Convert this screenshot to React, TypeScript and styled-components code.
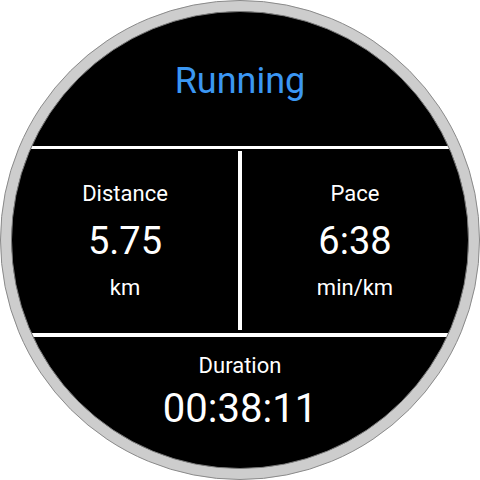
import React from "react";
import styled, { createGlobalStyle } from "styled-components";

const GlobalStyle = createGlobalStyle`
  html, body {
    margin: 0;
    padding: 0;
    background: #ffffff;
  }
  body {
    font-family: Roboto, "Noto Sans", "Liberation Sans", sans-serif;
  }
`;

const Bezel = styled.div`
  box-sizing: border-box;
  width: 480px;
  height: 480px;
  border-radius: 50%;
  border: 1px solid #8a8a8a;
  background: #cdcdcd;
  padding: 10px;
`;

const Face = styled.div`
  box-sizing: border-box;
  width: 100%;
  height: 100%;
  border-radius: 50%;
  border: 1px solid #7c7c7c;
  background: #000000;
  overflow: hidden;
  display: flex;
  flex-direction: column;
`;

const Header = styled.div`
  height: 134px;
  flex: none;
  display: flex;
  align-items: center;
  justify-content: center;
  padding-top: 3px;
  box-sizing: border-box;
`;

const Title = styled.div`
  color: #3b97f3;
  font-size: 36px;
  line-height: 42px;
  letter-spacing: 0;
`;

const Rule = styled.div<{ $thick: number; $after: number }>`
  flex: none;
  height: ${(p) => p.$thick}px;
  margin-bottom: ${(p) => p.$after}px;
  background: #ffffff;
`;

const Middle = styled.div`
  flex: none;
  height: 179px;
  display: flex;
  margin-bottom: 3px;
`;

const Divider = styled.div`
  flex: none;
  width: 4px;
  background: #ffffff;
`;

const Cell = styled.div`
  flex: 1;
  display: flex;
  flex-direction: column;
  align-items: center;
  justify-content: center;
  gap: 12px;
`;

const Footer = styled.div`
  flex: 1;
  display: flex;
  flex-direction: column;
  align-items: center;
  padding-top: 16px;
  gap: 7px;
`;

const Label = styled.div`
  color: #ffffff;
  font-size: 22px;
  line-height: 26px;
`;

const Value = styled.div<{ $size: number }>`
  color: #ffffff;
  font-size: ${(p) => p.$size}px;
  line-height: ${(p) => p.$size + 6}px;
`;

const Stat: React.FC<{ label: string; value: string; unit: string }> = ({
  label,
  value,
  unit,
}) => (
  <Cell>
    <Label>{label}</Label>
    <Value $size={38}>{value}</Value>
    <Label>{unit}</Label>
  </Cell>
);

export default function App() {
  return (
    <>
      <GlobalStyle />
      <Bezel>
        <Face>
          <Header>
            <Title>Running</Title>
          </Header>
          <Rule $thick={3} $after={2} />
          <Middle>
            <Stat label="Distance" value="5.75" unit="km" />
            <Divider />
            <Stat label="Pace" value="6:38" unit="min/km" />
          </Middle>
          <Rule $thick={4} $after={0} />
          <Footer>
            <Label>Duration</Label>
            <Value $size={40}>00:38:11</Value>
          </Footer>
        </Face>
      </Bezel>
    </>
  );
}
